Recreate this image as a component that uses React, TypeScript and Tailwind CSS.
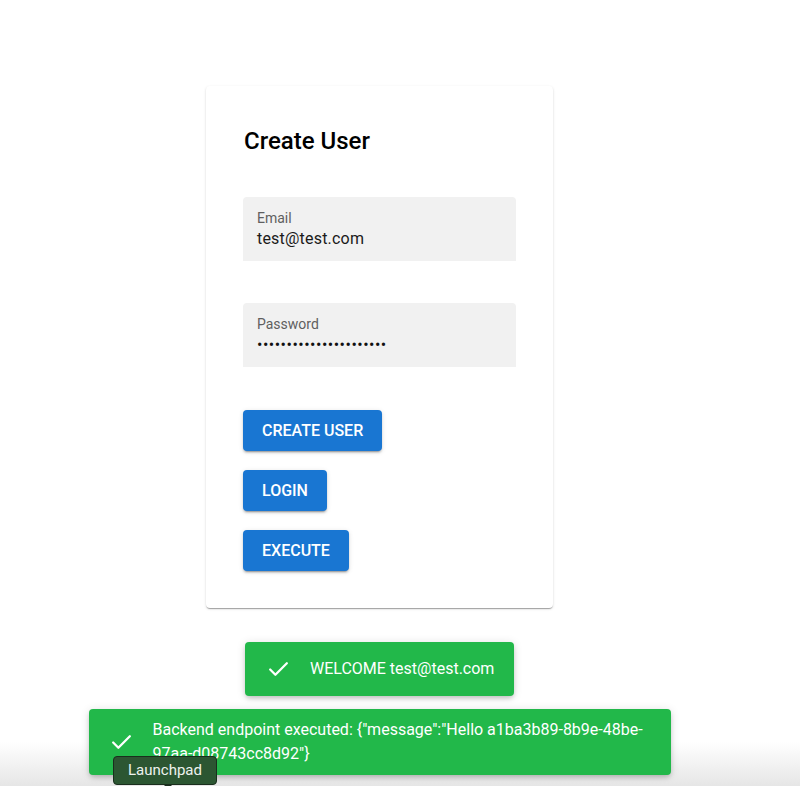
import { Check } from 'lucide-react';

const font = { fontFamily: 'Roboto, "Liberation Sans", sans-serif' };

function Field({ label, value, dots }: { label: string; value: string; dots?: boolean }) {
  return (
    <div className="h-16 w-[273px] rounded-t-[4px] bg-[#f1f1f1] px-[14px] pt-[13px]">
      <div className="text-[14px] leading-4 text-[#5f5f5f]">{label}</div>
      <div
        className={
          dots
            ? 'mt-[2px] text-[16px] leading-[22px] tracking-[0.5px] text-[#111]'
            : 'mt-[2px] text-[16px] leading-[22px] tracking-[0.2px] text-[#1a1a1a]'
        }
      >
        {value}
      </div>
    </div>
  );
}

function Button({ children }: { children: string }) {
  return (
    <button className="h-[41px] self-start rounded-[4px] bg-[#1976d2] px-[19px] text-[16px] font-medium uppercase text-white shadow-[0_3px_1px_-2px_rgba(0,0,0,0.2),0_2px_2px_0_rgba(0,0,0,0.14),0_1px_5px_0_rgba(0,0,0,0.12)]">
      {children}
    </button>
  );
}

export default function App() {
  return (
    <div className="relative h-[786px] w-[800px] overflow-hidden bg-white" style={font}>
      <div className="pointer-events-none absolute inset-x-0 bottom-0 h-[44px] bg-gradient-to-b from-white to-[#e6e6e6]" />
      <div className="relative flex w-[759px] flex-col items-center pt-[86px]">
        <div className="flex w-[347px] flex-col rounded-[4px] bg-white pb-[37px] pl-[37px] pt-[40px] shadow-[0_2px_1px_-1px_rgba(0,0,0,0.2),0_1px_1px_0_rgba(0,0,0,0.14),0_1px_3px_0_rgba(0,0,0,0.12)]">
          <h1 className="ml-[1px] text-[24px] font-medium leading-[30px] text-black">Create User</h1>
          <div className="mt-[41px]">
            <Field label="Email" value="test@test.com" />
          </div>
          <div className="mt-[42px]">
            <Field label="Password" value={'•'.repeat(22)} dots />
          </div>
          <div className="mt-[43px] flex flex-col gap-[19px]">
            <Button>Create User</Button>
            <Button>Login</Button>
            <Button>Execute</Button>
          </div>
        </div>

        <div className="mt-[34px] flex h-[54px] w-[269px] items-center rounded-[4px] bg-[#22b84a] pl-[21px] text-white shadow-[0_3px_5px_-1px_rgba(0,0,0,0.2),0_1px_10px_0_rgba(0,0,0,0.12)]">
          <Check className="h-[25px] w-[25px]" strokeWidth={2.2} />
          <span className="ml-[19px] text-[16px]">WELCOME test@test.com</span>
        </div>

        <div className="mt-[13px] flex h-[66px] w-[582px] items-center rounded-[4px] bg-[#22b84a] pl-[20px] pr-[20px] text-white shadow-[0_3px_5px_-1px_rgba(0,0,0,0.2),0_1px_10px_0_rgba(0,0,0,0.12)]">
          <Check className="h-[25px] w-[25px] shrink-0" strokeWidth={2.2} />
          <span className="ml-[19px] text-[16px] leading-[24px]">
            Backend endpoint executed: {'{"message":"Hello a1ba3b89-8b9e-48be-97aa-d08743cc8d92"}'}
          </span>
        </div>
      </div>

      <div className="absolute left-[113px] top-[756px] rounded-[4px] border border-[#1a2e1d] bg-[#2c5632] px-[14px] py-[4px] text-[15px] leading-[19px] text-[#eef2ee]">
        Launchpad
        <div className="absolute left-[49px] top-full h-0 w-0 border-x-[5px] border-t-[5px] border-x-transparent border-t-[#1a2e1d]" />
      </div>
    </div>
  );
}
